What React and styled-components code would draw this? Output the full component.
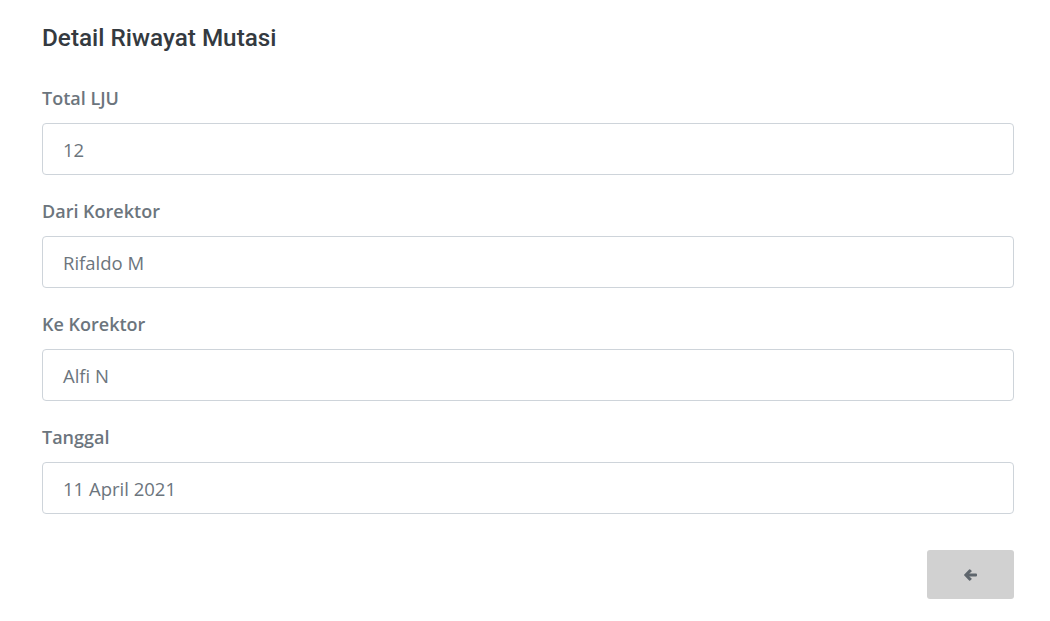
import React from 'react'
import styled, { createGlobalStyle } from 'styled-components'

const GlobalStyle = createGlobalStyle`
  body {
    margin: 0;
    background: #fff;
    font-family: "Open Sans", "Noto Sans", sans-serif;
  }
`;

const Page = styled.div`
  padding: 23px 36px 22px 42px;
  display: flex;
  flex-direction: column;
`;

const Title = styled.h2`
  margin: 0 0 33px;
  font-family: Roboto, sans-serif;
  font-weight: 500;
  font-size: 24.3px;
  line-height: 30px;
  color: #343a40;
`;

const Field = styled.div`
  display: flex;
  flex-direction: column;
  margin-bottom: 24px;
`;

const Label = styled.label`
  font-size: 18px;
  font-weight: 600;
  color: #6c757d;
  line-height: 24px;
  margin-bottom: 13px;
`;

const Input = styled.div`
  height: 50px;
  border: 1px solid #ced4da;
  border-radius: 4px;
  padding: 0 20px;
  display: flex;
  align-items: center;
  font-size: 18.5px;
  color: #6c757d;
`;

const Actions = styled.div`
  display: flex;
  justify-content: flex-end;
  margin-top: 12px;
`;

const BackButton = styled.button`
  width: 87px;
  height: 49px;
  border: none;
  border-radius: 3px;
  background: #d1d1d1;
  color: #5f666d;
  display: flex;
  align-items: center;
  justify-content: center;
  cursor: pointer;
`;

const ArrowLeft = () => (
  <svg width="13" height="12" viewBox="0 0 13 12" fill="currentColor">
    <path d="M6.2 0.4 L7.4 1.6 a0.8 0.8 0 0 1 0 1.1 L5.2 4.6 H12 a1 1 0 0 1 1 1 v0.8 a1 1 0 0 1 -1 1 H5.2 L7.4 9.3 a0.8 0.8 0 0 1 0 1.1 L6.2 11.6 a0.8 0.8 0 0 1 -1.1 0 L0.3 6.6 a0.9 0.9 0 0 1 0 -1.2 L5.1 0.4 a0.8 0.8 0 0 1 1.1 0 Z" />
  </svg>
);

const fields = [
  { label: 'Total LJU', value: '12' },
  { label: 'Dari Korektor', value: 'Rifaldo M' },
  { label: 'Ke Korektor', value: 'Alfi N' },
  { label: 'Tanggal', value: '11 April 2021' },
];

export default function App() {
  return (
    <>
      <GlobalStyle />
      <Page>
        <Title>Detail Riwayat Mutasi</Title>
        {fields.map((f) => (
          <Field key={f.label}>
            <Label>{f.label}</Label>
            <Input>{f.value}</Input>
          </Field>
        ))}
        <Actions>
          <BackButton>
            <ArrowLeft />
          </BackButton>
        </Actions>
      </Page>
    </>
  );
}
